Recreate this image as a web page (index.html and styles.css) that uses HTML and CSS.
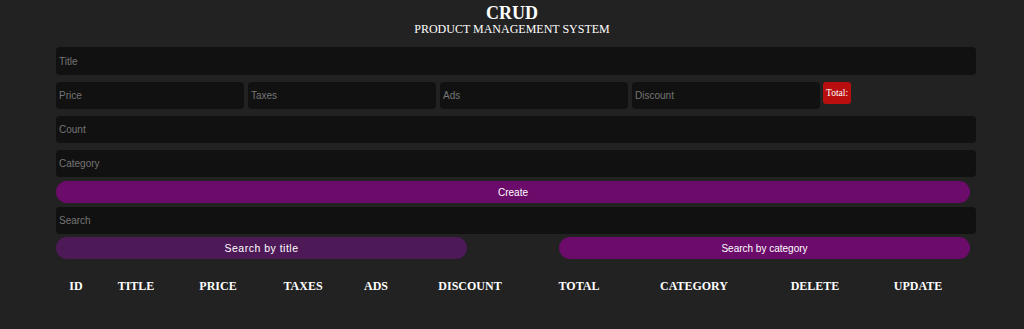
FILE: index.html
```html
<!DOCTYPE html>
<html lang="en">
<head>
<meta charset="utf-8">
<title>CRUD</title>
<link rel="stylesheet" href="styles.css">
</head>
<body>
<header class="head">
  <h1 class="head-title">CRUD</h1>
  <p class="head-sub">PRODUCT MANAGEMENT SYSTEM</p>
</header>
<main class="crud">
  <input class="field field-title" type="text" placeholder="Title">
  <div class="price-row">
    <input class="field field-small" type="number" placeholder="Price">
    <input class="field field-small" type="number" placeholder="Taxes">
    <input class="field field-small" type="number" placeholder="Ads">
    <input class="field field-small" type="number" placeholder="Discount">
    <small class="total">Total:</small>
  </div>
  <input class="field field-count" type="number" placeholder="Count">
  <input class="field field-category" type="text" placeholder="Category">
  <button class="btn btn-create">Create</button>
  <input class="field field-search" type="text" placeholder="Search">
  <div class="search-row">
    <button class="btn btn-search btn-dim">Search by title</button>
    <button class="btn btn-search">Search by category</button>
  </div>
  <table class="products">
    <colgroup>
      <col class="c-id"><col class="c-title"><col class="c-price"><col class="c-taxes"><col class="c-ads">
      <col class="c-discount"><col class="c-total"><col class="c-category"><col class="c-delete"><col class="c-update">
    </colgroup>
    <thead>
      <tr>
        <th>ID</th><th>TITLE</th><th>PRICE</th><th>TAXES</th><th>ADS</th>
        <th>DISCOUNT</th><th>TOTAL</th><th>CATEGORY</th><th>DELETE</th><th>UPDATE</th>
      </tr>
    </thead>
    <tbody></tbody>
  </table>
</main>
</body>
</html>
```
FILE: styles.css
```css
* { box-sizing: border-box; }
html, body { margin: 0; padding: 0; }
body {
  background: #222222;
  color: #ffffff;
  font-family: "Liberation Serif", "Times New Roman", serif;
  height: 329px;
  overflow: hidden;
}
.head { text-align: center; padding-top: 3px; }
.head-title {
  margin: 0;
  font-size: 18px;
  line-height: 20px;
  font-weight: bold;
}
.head-sub {
  margin: 0;
  font-size: 12px;
  line-height: 12px;
}
.crud {
  padding: 12px 48px 0 56px;
  display: flex;
  flex-direction: column;
  align-items: flex-start;
}
.field {
  display: block;
  width: 920px;
  height: 28px;
  background: #111111;
  border: none;
  outline: none;
  border-radius: 4px;
  padding: 0 3px;
  color: #ffffff;
  font-family: "Liberation Sans", Arial, sans-serif;
  font-size: 10px;
  -moz-appearance: textfield;
}
.field::-webkit-outer-spin-button,
.field::-webkit-inner-spin-button { -webkit-appearance: none; margin: 0; }
.field::placeholder { color: #757575; }
.price-row {
  display: flex;
  align-items: flex-start;
  gap: 4px;
  margin-top: 7px;
}
.field-small { width: 188px; height: 27px; }
.total {
  margin-left: -1px;
  background: #b80e0e;
  color: #ffffff;
  font-family: "Liberation Serif", "Times New Roman", serif;
  font-size: 9.5px;
  line-height: 22px;
  height: 22px;
  padding: 0 3px;
  border-radius: 3px;
}
.field-count { margin-top: 7px; height: 27px; }
.field-category { margin-top: 7px; height: 27px; }
.field-search { margin-top: 4px; height: 27px; }
.btn {
  display: block;
  height: 22px;
  border: none;
  border-radius: 11px;
  background: #6b0b6a;
  color: #ffffff;
  font-family: "Liberation Sans", Arial, sans-serif;
  font-size: 10px;
  padding: 0;
  cursor: pointer;
}
.btn-create { width: 914px; margin-top: 4px; }
.search-row {
  width: 914px;
  display: flex;
  justify-content: space-between;
  margin-top: 3px;
}
.btn-search { width: 411px; }
.btn-dim {
  background: #4e1957;
  font-size: 10.5px;
  letter-spacing: 0.5px;
}
.products {
  width: 914px;
  table-layout: fixed;
  border-collapse: collapse;
  margin-top: 20px;
}
.products th {
  padding: 0;
  font-size: 12px;
  line-height: 15px;
  font-weight: bold;
  text-align: center;
}
.c-id { width: 40px; }
.c-title { width: 80px; }
.c-price { width: 84px; }
.c-taxes { width: 86px; }
.c-ads { width: 60px; }
.c-discount { width: 128px; }
.c-total { width: 90px; }
.c-category { width: 140px; }
.c-delete { width: 102px; }
.c-update { width: 104px; }
```
